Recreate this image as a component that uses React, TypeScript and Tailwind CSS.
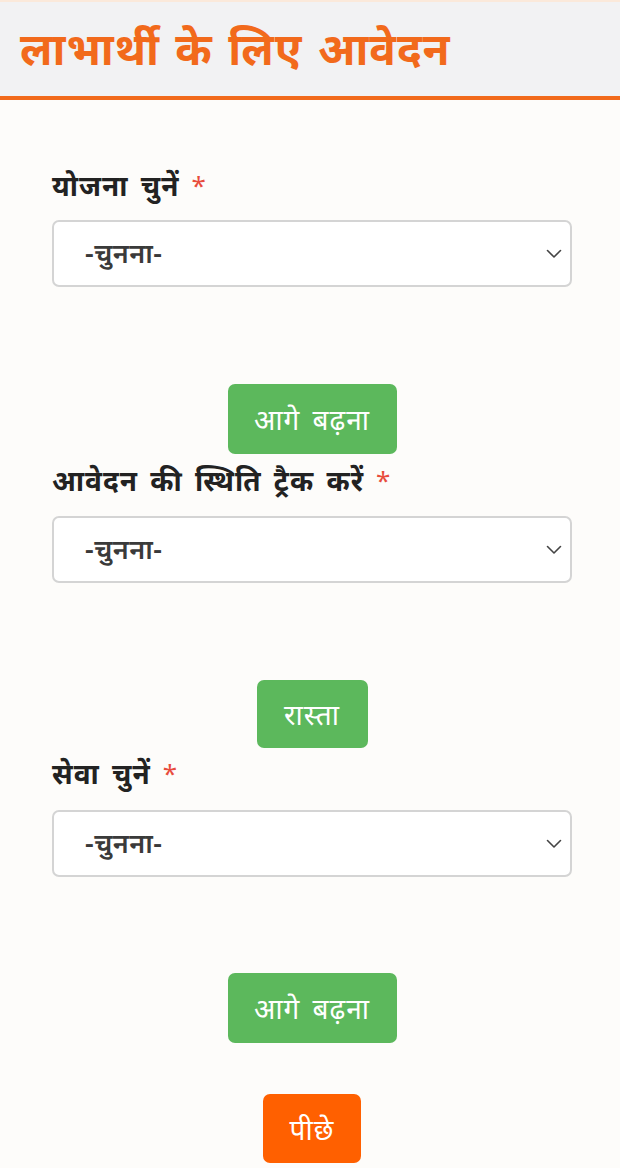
import React from "react";

const font = { fontFamily: '"Noto Sans", "Noto Sans Devanagari", "Lohit Devanagari", sans-serif' };

function Chevron() {
  return (
    <svg width="16" height="10" viewBox="0 0 16 10" fill="none" className="shrink-0">
      <path d="M1.5 1.5 L8 8 L14.5 1.5" stroke="#444" strokeWidth="1.6" strokeLinecap="round" strokeLinejoin="round" />
    </svg>
  );
}

function Label({ text, className = "" }: { text: string; className?: string }) {
  return (
    <div className={`h-[36px] flex items-center text-[28px] tracking-[1px] font-bold text-[#222] ${className}`}>
      <span className="[word-spacing:4px]">{text}</span>
      <span className="ml-[12px] text-[#e84c3d] font-normal text-[26px]">*</span>
    </div>
  );
}

function Select({ className = "" }: { className?: string }) {
  return (
    <div className={`h-[67px] w-full rounded-[7px] border-2 border-[#d4d4d4] bg-white flex items-center justify-between pl-[31px] pr-[8px] ${className}`}>
      <span className="text-[27px] tracking-[0.5px] font-semibold text-[#3a3a3a]">-चुनना-</span>
      <Chevron />
    </div>
  );
}

function GreenButton({ text, w, h, className = "" }: { text: string; w: string; h: string; className?: string }) {
  return (
    <div className={`flex justify-center ${className}`}>
      <button className={`${w} ${h} rounded-[7px] bg-[#5cb85c] text-white text-[28px] tracking-[1px] [word-spacing:4px] flex items-center justify-center`}>
        {text}
      </button>
    </div>
  );
}

export default function App() {
  return (
    <div style={font} className="w-[620px] h-[1168px] bg-[#fdfcfa] overflow-hidden">
      <div className="h-[2px] bg-[#fbe9da]" />
      <div className="h-[98px] bg-[#f2f2f3] border-b-[4px] border-[#f26a1b] flex items-center pl-[20px]">
        <h1 className="text-[44px] tracking-[1px] [word-spacing:3px] font-bold text-[#f26a1b] leading-none -mt-[2px]">लाभार्थी के लिए आवेदन</h1>
      </div>
      <div className="pl-[52px] pr-[48px]">
        <Label text="योजना चुनें" className="mt-[67px]" />
        <Select className="mt-[17px]" />
        <GreenButton text="आगे बढ़ना" w="w-[169px]" h="h-[70px]" className="mt-[97px]" />
        <Label text="आवेदन की स्थिति ट्रैक करें" className="mt-[8px]" />
        <Select className="mt-[18px]" />
        <GreenButton text="रास्ता" w="w-[111px]" h="h-[68px]" className="mt-[97px]" />
        <Label text="सेवा चुनें" className="mt-[7px]" />
        <Select className="mt-[19px]" />
        <GreenButton text="आगे बढ़ना" w="w-[169px]" h="h-[70px]" className="mt-[96px]" />
        <div className="flex justify-center mt-[51px]">
          <button className="w-[98px] h-[69px] rounded-[7px] bg-[#ff6000] text-white text-[28px] tracking-[1px] flex items-center justify-center">
            पीछे
          </button>
        </div>
      </div>
    </div>
  );
}
